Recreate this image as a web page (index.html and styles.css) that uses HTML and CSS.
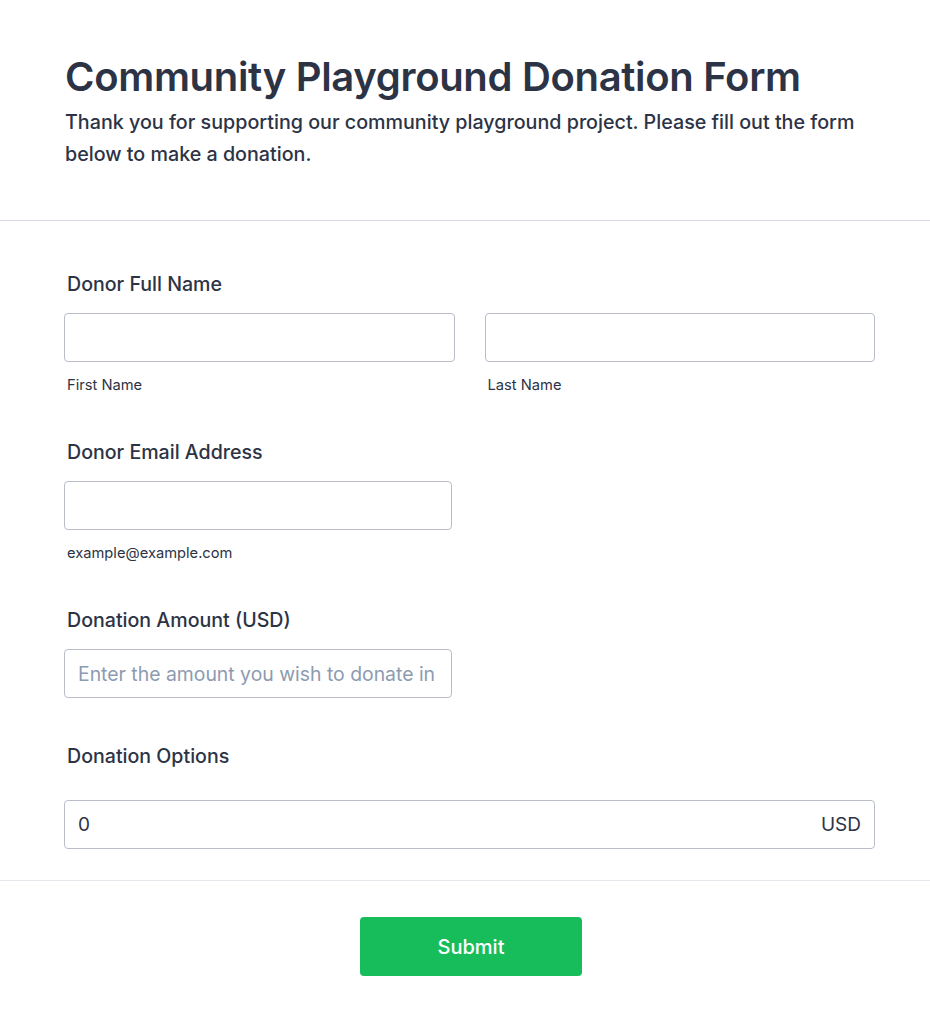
FILE: index.html
```html
<!DOCTYPE html>
<html>
<head>
<meta charset="utf-8">
<link rel="stylesheet" href="styles.css">
</head>
<body>
<div class="page">
  <header class="header">
    <h1 class="title">Community Playground Donation Form</h1>
    <p class="subtitle">Thank you for supporting our community playground project. Please fill out the form below to make a donation.</p>
  </header>
  <form class="form">
    <div class="field">
      <label class="label">Donor Full Name</label>
      <div class="row">
        <div class="col">
          <input class="input" type="text">
          <span class="sublabel">First Name</span>
        </div>
        <div class="col">
          <input class="input" type="text">
          <span class="sublabel">Last Name</span>
        </div>
      </div>
    </div>
    <div class="field">
      <label class="label">Donor Email Address</label>
      <div class="half">
        <input class="input" type="text">
        <span class="sublabel">example@example.com</span>
      </div>
    </div>
    <div class="field">
      <label class="label">Donation Amount (USD)</label>
      <div class="half">
        <input class="input" type="text" placeholder="Enter the amount you wish to donate in USD">
      </div>
    </div>
    <div class="field last">
      <label class="label">Donation Options</label>
      <div class="money">
        <span class="money-value">0</span>
        <span class="money-cur">USD</span>
      </div>
    </div>
  </form>
  <div class="footer">
    <button class="submit" type="button">Submit</button>
  </div>
</div>
</body>
</html>
```
FILE: styles.css
```css
* { box-sizing: border-box; }
html, body { margin: 0; padding: 0; background: #fff; }
body { font-family: Inter, "Noto Sans", sans-serif; color: #2c3345; }
.page { width: 930px; }
.header {
  padding: 52px 55px 50px 65px;
  border-bottom: 1px solid #d8dae3;
}
.title {
  margin: 0;
  font-size: 40px;
  font-weight: 600;
  line-height: 50px;
  color: #2c3345;
  letter-spacing: -0.32px;
}
.subtitle {
  margin: 4px 0 0;
  font-size: 19.7px;
  font-weight: 500;
  line-height: 32px;
  color: #2c3345;
}
.form {
  padding: 49px 55px 31px 64px;
}
.field { margin-bottom: 44px; }
.field.last { margin-bottom: 0; }
.label {
  display: block;
  padding-left: 3px;
  font-size: 19.6px;
  font-weight: 500;
  line-height: 28px;
  margin-bottom: 15px;
}
.row { display: flex; gap: 30px; }
.col { flex: 1; display: flex; flex-direction: column; }
.half { width: 388px; display: flex; flex-direction: column; }
.input {
  width: 100%;
  height: 49px;
  border: 1px solid #b8bdc9;
  border-radius: 4px;
  padding: 0 13px;
  font-family: Inter, "Noto Sans", sans-serif;
  font-size: 19.4px;
  color: #2c3345;
  background: #fff;
  outline: none;
}
.input::placeholder { color: #8d9bb0; }
.sublabel {
  padding-left: 3px;
  margin-top: 14px;
  font-size: 14.7px;
  line-height: 18px;
  color: #2c3345;
}
.money {
  margin-top: 30px;
  height: 49px;
  border: 1px solid #b8bdc9;
  border-radius: 4px;
  padding: 0 13px;
  display: flex;
  align-items: center;
  justify-content: space-between;
  font-size: 19px;
  color: #2c3345;
}
.footer {
  border-top: 1px solid #e6e8ee;
  padding: 36px 0 50px;
  display: flex;
  justify-content: center;
}
.submit {
  width: 222px;
  height: 59px;
  border: none;
  border-radius: 4px;
  background: #18bd5b;
  color: #fff;
  font-family: Inter, "Noto Sans", sans-serif;
  font-size: 20px;
  font-weight: 500;
  margin-left: 12px;
}
```
